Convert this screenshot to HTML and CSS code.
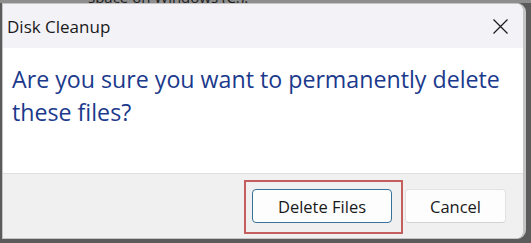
FILE: index.html
```html
<!DOCTYPE html>
<html lang="en">
<head>
<meta charset="utf-8">
<title>Disk Cleanup</title>
<link rel="stylesheet" href="styles.css">
</head>
<body>
<div class="backdrop"><span class="backdrop-text">space on Windows (C:).</span></div>
<div class="dialog">
  <div class="titlebar">
    <span class="title">Disk Cleanup</span>
    <svg class="close" width="15" height="15" viewBox="0 0 15 15" aria-label="Close">
      <path d="M0.5 0.5 L14.5 14.5 M14.5 0.5 L0.5 14.5" stroke="#1a1a1a" stroke-width="1.2" fill="none"/>
    </svg>
  </div>
  <div class="content">
    <p class="instruction">Are you sure you want to permanently delete these files?</p>
  </div>
  <div class="footer">
    <div class="highlight">
      <button class="btn btn-default">Delete Files</button>
    </div>
    <button class="btn btn-cancel">Cancel</button>
  </div>
</div>
</body>
</html>
```
FILE: styles.css
```css
html, body {
  margin: 0;
  padding: 0;
}
body {
  width: 531px;
  height: 243px;
  overflow: hidden;
  background: #5b5b5b;
  font-family: "Open Sans", "Noto Sans", sans-serif;
}
.backdrop {
  height: 3px;
  background: #8e8e8e;
  overflow: hidden;
  padding-left: 88px;
}
.backdrop-text {
  display: block;
  font-size: 15px;
  line-height: 15px;
  margin-top: -10px;
  color: #1e1e1e;
  white-space: nowrap;
}
.dialog {
  box-sizing: border-box;
  margin-left: 2px;
  width: 524px;
  height: 236px;
  border: 1px solid #c4c4c4;
  border-right-width: 3px;
  border-radius: 0 9px 9px 0;
  overflow: hidden;
  display: flex;
  flex-direction: column;
  background: #ffffff;
}
.titlebar {
  height: 44px;
  flex: none;
  background: #f2f2f7;
  display: flex;
  align-items: center;
  justify-content: space-between;
  padding: 0 15px 0 4px;
}
.title {
  font-size: 17px;
  color: #1a1a1a;
}
.close {
  display: block;
}
.content {
  flex: 1;
  background: #ffffff;
  padding: 15px 9px 0 9px;
  border-bottom: 1px solid #dedede;
}
.instruction {
  margin: 0;
  font-size: 23.2px;
  line-height: 33px;
  color: #1b3a8c;
}
.footer {
  flex: none;
  height: 64px;
  box-sizing: border-box;
  background: #f0f0f0;
  display: flex;
  justify-content: flex-end;
  align-items: flex-start;
  padding: 6px 17px 0 0;
}
.highlight {
  border: 2px solid #c45f5f;
  padding: 7px 9px 9px 6px;
}
.btn {
  box-sizing: border-box;
  height: 34px;
  border-radius: 4px;
  font-family: "Open Sans", "Noto Sans", sans-serif;
  font-size: 16.5px;
  color: #1a1a1a;
  background: #fdfdfd;
  padding: 0;
  display: block;
}
.btn-default {
  width: 140px;
  border: 1px solid #36729a;
}
.btn-cancel {
  width: 101px;
  margin-top: 9px;
  margin-left: 2px;
  border: 1px solid #e2e2e2;
  border-bottom-color: #d2d2d2;
}
```
